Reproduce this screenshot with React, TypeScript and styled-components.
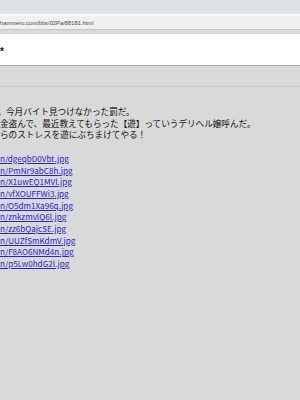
import React from 'react';
import styled, { createGlobalStyle } from 'styled-components';

const GlobalStyle = createGlobalStyle`
  html, body {
    margin: 0;
    padding: 0;
    background: #d9d9d9;
    overflow: hidden;
  }
`;

const Page = styled.div`
  width: 300px;
  height: 400px;
  overflow: hidden;
  background: #d9d9d9;
  font-family: "Noto Sans CJK JP", "Liberation Sans", sans-serif;
`;

const TopBar = styled.div`
  height: 14px;
  background: #dfe2e6;
`;

const AddressBar = styled.div`
  height: 13px;
  border-top: 2px solid #fafbfc;
  border-bottom: 1px solid #c6c7c9;
  background: #eff0f2;
  display: flex;
  align-items: center;
  font-family: "Liberation Sans", sans-serif;
  font-size: 5.8px;
  color: #4a4a4a;
  white-space: nowrap;
`;

const Strip = styled.div`
  height: 4px;
  background: #dadada;
`;

const Header = styled.div`
  height: 31px;
  background: #ffffff;
  border-bottom: 1px solid #a9a9a9;
  display: flex;
  align-items: center;
`;

const Star = styled.span`
  font-family: "Liberation Sans", sans-serif;
  font-weight: bold;
  font-size: 10px;
  color: #111;
  margin-top: 3px;
`;

const NavBar = styled.div`
  height: 20px;
  border-bottom: 1px solid #c6c6c6;
`;

const Body = styled.div`
  padding-top: 19px;
  font-size: 8.6px;
  line-height: 11.7px;
  color: #111;
  white-space: nowrap;
`;

const Clipped = styled.span`
  margin-left: -2.6px;
`;

const Link = styled.a`
  font-size: 8.1px;
  color: #2424d4;
  text-decoration: underline;
`;

const links = [
  'dgeqbD0Vbt',
  'PmNr9abC8h',
  'X1uwEQ1MVl',
  'vfXOUFFWi3',
  'O5dm1Xa96q',
  'znkzmvlQ6l',
  'zz6bQajcSE',
  'UUZfSmKdmV',
  'F8AO6NMd4n',
  'p5Lw0hdG2l',
];

export default function App() {
  return (
    <Page>
      <GlobalStyle />
      <TopBar />
      <AddressBar>hannneru.com/bbs/02Pa/88181.html</AddressBar>
      <Strip />
      <Header>
        <Star>*</Star>
      </Header>
      <NavBar />
      <Body>
        <Clipped>。今月バイト見つけなかった罰だ。</Clipped>
        <br />
        金盗んで、最近教えてもらった【遊】っていうデリヘル嬢呼んだ。
        <br />
        らのストレスを遊にぶちまけてやる！
        <br />
        <br />
        {links.map(id => (
          <React.Fragment key={id}>
            <Link href="#">n/{id}.jpg</Link>
            <br />
          </React.Fragment>
        ))}
      </Body>
    </Page>
  );
}
